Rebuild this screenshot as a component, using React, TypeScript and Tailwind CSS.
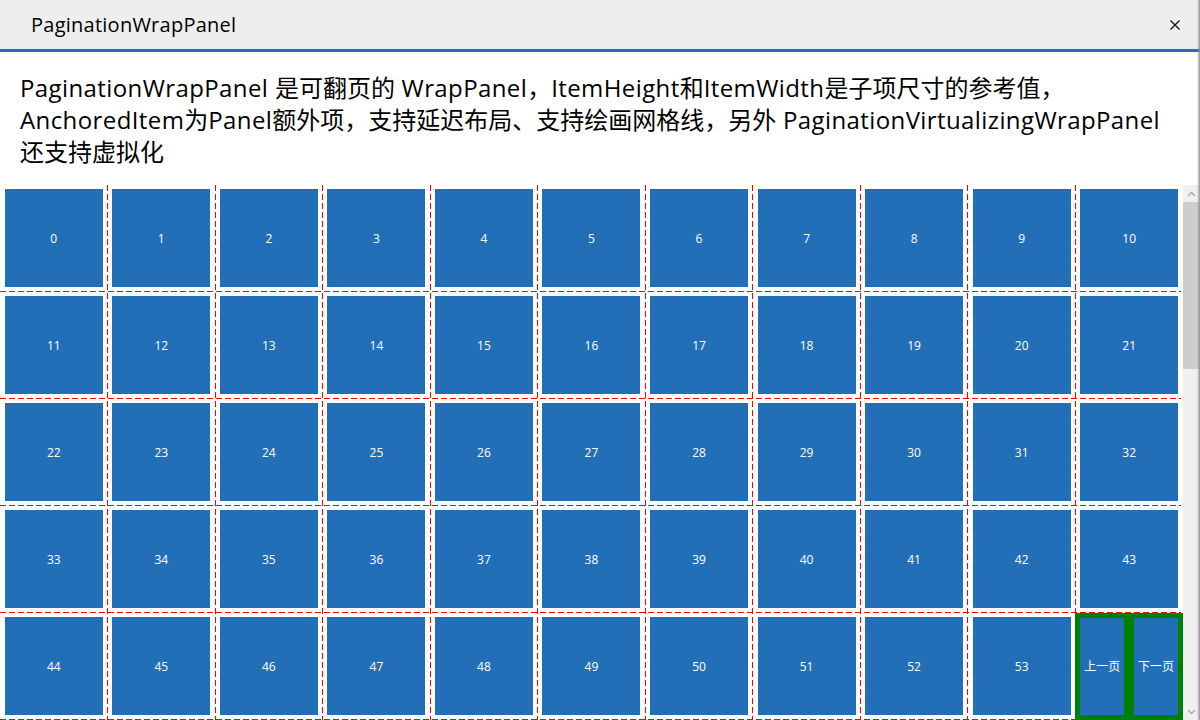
const items = Array.from({ length: 54 }, (_, i) => i);

const COLS = 11;
const ROWS = 5;
const GRID_W = 1183;
const ROW_H = 107;

function GridLines() {
  const colW = GRID_W / COLS;
  return (
    <svg className="pointer-events-none absolute inset-0" width={GRID_W} height={ROW_H * ROWS}>
      {Array.from({ length: COLS - 1 }, (_, k) => {
        const x = Math.floor(colW * (k + 1)) + 0.5;
        return <line key={`v${k}`} x1={x} y1={0} x2={x} y2={ROW_H * ROWS} stroke="#ff0000" strokeWidth={1} strokeDasharray="6 3" />;
      })}
      {Array.from({ length: ROWS }, (_, k) => {
        const y = ROW_H * (k + 1) - 0.5;
        return <line key={`h${k}`} x1={0} y1={y} x2={GRID_W - 2} y2={y} stroke="#ff0000" strokeWidth={1} strokeDasharray="6 3" />;
      })}
    </svg>
  );
}

function Cell({ n }: { n: number }) {
  return (
    <div className="flex items-center justify-center pb-px">
      <div className="flex h-[98px] w-[98px] items-center justify-center bg-[#236fb7] pt-px text-[12px] text-white">{n}</div>
    </div>
  );
}

function Pager() {
  return (
    <div className="relative z-10 flex gap-[10px] bg-[#008000] p-[5px] text-[12px] text-white">
      <div className="flex flex-1 items-center justify-center bg-[#236fb7]">上一页</div>
      <div className="flex flex-1 items-center justify-center bg-[#236fb7]">下一页</div>
    </div>
  );
}

function ScrollBar() {
  return (
    <div className="flex w-[17px] flex-col bg-[#f0f0f0]">
      <div className="flex h-[17px] items-center justify-center">
        <svg width="9" height="6" viewBox="0 0 9 6">
          <polyline points="1,5 4.5,1.5 8,5" fill="none" stroke="#a6a6a6" strokeWidth="1.3" />
        </svg>
      </div>
      <div className="h-[167px] bg-[#cdcdcd]" />
      <div className="flex-1" />
      <div className="flex h-[17px] items-center justify-center">
        <svg width="9" height="6" viewBox="0 0 9 6">
          <polyline points="1,1 4.5,4.5 8,1" fill="none" stroke="#a6a6a6" strokeWidth="1.3" />
        </svg>
      </div>
    </div>
  );
}

// latin runs are set a touch wider so the lines break where the original does
function L({ children }: { children: string }) {
  return <span className="tracking-[0.4px]">{children}</span>;
}

export default function App() {
  return (
    <div className="relative h-[720px] w-[1200px] overflow-hidden bg-white font-['Open_Sans','Noto_Sans_CJK_SC',sans-serif] text-black">
      <header className="flex h-[49px] items-center justify-between bg-[#eeeeee] pl-[31px] pr-[20px]">
        <span className="text-[20px] tracking-[0.25px]">PaginationWrapPanel</span>
        <svg width="10" height="10" viewBox="0 0 10 10" className="mt-px">
          <path d="M0.5 0.5 L9.5 9.5 M9.5 0.5 L0.5 9.5" stroke="#111" strokeWidth="1.3" />
        </svg>
      </header>
      <div className="h-[3px] bg-[#1f6fbf]" />

      <div className="whitespace-nowrap px-[20px] pt-[20px] text-[24px] leading-[32px]">
        <div>
          <L>PaginationWrapPanel </L>是可翻页的<L> WrapPanel</L>，<L>ItemHeight</L>和<L>ItemWidth</L>是子项尺寸的参考值，
        </div>
        <div>
          <L>AnchoredItem</L>为<L>Panel</L>额外项，支持延迟布局、支持绘画网格线，另外<L> PaginationVirtualizingWrapPanel</L>
        </div>
        <div>还支持虚拟化</div>
      </div>

      <div className="mt-[17px] flex h-[535px]">
        <div className="relative grid w-[1183px] grid-cols-11 grid-rows-[repeat(5,107px)]">
          {items.map((n) => (
            <Cell key={n} n={n} />
          ))}
          <Pager />
          <GridLines />
        </div>
        <ScrollBar />
      </div>

      <div className="pointer-events-none absolute right-0 top-0 h-full w-[3px] bg-gradient-to-r from-transparent to-[#8f8f8f]" />
    </div>
  );
}
